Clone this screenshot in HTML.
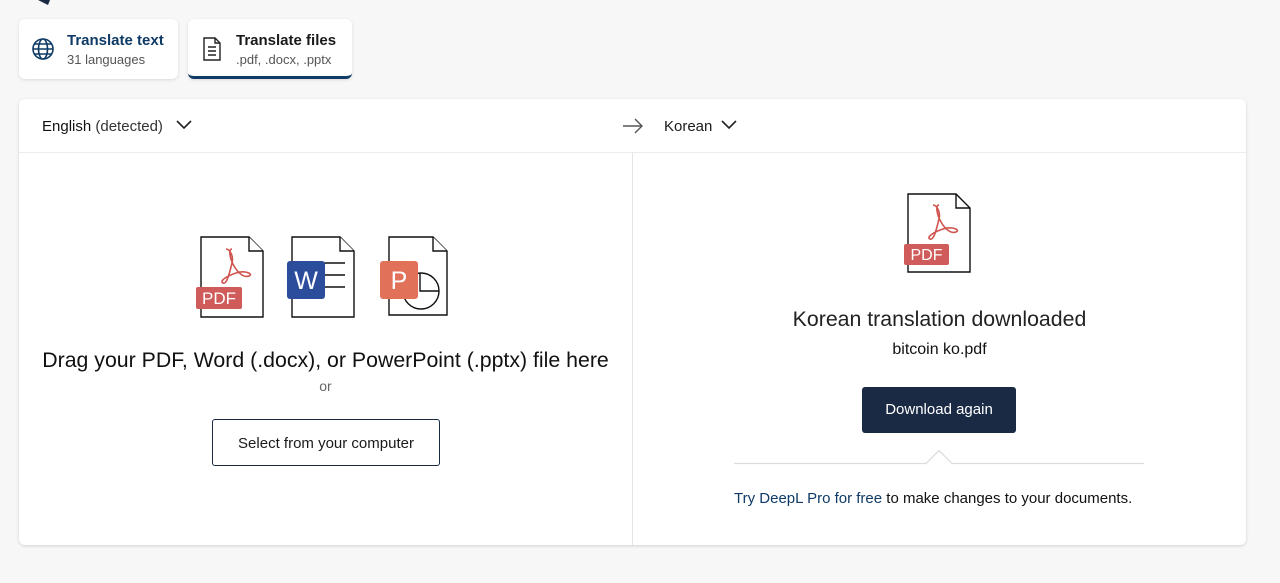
<!DOCTYPE html>
<html><head><meta charset="utf-8"><style>
*{margin:0;padding:0;box-sizing:border-box}
body{width:1280px;height:583px;background:#f7f7f8;font-family:"Liberation Sans",sans-serif;position:relative;overflow:hidden;color:#1a1a1a}
.tab{position:absolute;top:19px;height:60px;background:#fff;border-radius:6px;box-shadow:0 1px 3px rgba(0,0,0,.12)}
.t1{font-size:15px;font-weight:bold;position:absolute;top:13px}
.t2{font-size:13px;color:#555;position:absolute;top:33px}
.card{position:absolute;left:19px;top:99px;width:1227px;height:446px;background:#fff;border-radius:6px;box-shadow:0 1px 3px rgba(0,0,0,.15)}
.abs{position:absolute}
</style></head><body>
<svg class="abs" style="left:38px;top:0" width="14" height="6"><path d="M0 0 L10 5 L12 0Z" fill="#1a2a44"/></svg>
<div class="tab" style="left:19px;width:159px">
<svg class="abs" style="left:12px;top:18px" width="24" height="24" viewBox="0 0 24 24" fill="none" stroke="#0f3b66" stroke-width="1.6"><circle cx="12" cy="12" r="10"/><ellipse cx="12" cy="12" rx="4.5" ry="10"/><path d="M2 12h20M3.5 7h17M3.5 17h17"/></svg>
<div class="t1" style="left:48px;color:#0f3b66">Translate text</div><div class="t2" style="left:48px">31 languages</div></div>
<div class="tab" style="left:188px;width:164px;border-bottom:3px solid #0f3b66">
<svg class="abs" style="left:14px;top:18px" width="20" height="24" viewBox="0 0 20 24" fill="none" stroke="#222" stroke-width="1.4"><path d="M2 1h11l5 5v17H2z"/><path d="M13 1v5h5M6 10h8M6 14h8M6 18h8"/></svg>
<div class="t1" style="left:48px">Translate files</div><div class="t2" style="left:48px">.pdf, .docx, .pptx</div></div>

<div class="card">
<div class="abs" style="left:0;top:53px;width:1227px;border-top:1px solid #ececec"></div>
<div class="abs" style="left:613px;top:54px;height:392px;border-left:1px solid #e4e4e4"></div>
<div class="abs" style="left:23px;top:19px;font-size:15px"><span style="color:#111">English</span> <span style="color:#333">(detected)</span></div>
<svg class="abs" style="left:157px;top:21px" width="16" height="10"><path d="M1 1l7 7 7-7" fill="none" stroke="#222" stroke-width="1.6"/></svg>
<svg class="abs" style="left:603px;top:19px" width="22" height="16"><path d="M1 8h19M13 1l7 7-7 7" fill="none" stroke="#555" stroke-width="1.4"/></svg>
<div class="abs" style="left:645px;top:19px;font-size:15px">Korean</div>
<svg class="abs" style="left:702px;top:21px" width="16" height="10"><path d="M1 1l7 7 7-7" fill="none" stroke="#222" stroke-width="1.6"/></svg>

<svg class="abs" style="left:175px;top:136px" width="260" height="85" viewBox="0 0 260 85">
<g fill="#fff" stroke="#111" stroke-width="1.4">
<path d="M7 2h48l14 14v66H7z"/><path d="M55 2v14h14"/>
<path d="M98 2h48l14 14v66H98z"/><path d="M146 2v14h14"/>
<path d="M195 2h44l14 14v64H195z"/><path d="M239 2v14h14"/>
</g>
<path d="M38 14c-4 0-2 10 2 17s10 12 15 10-4-6-13-3-17 8-13 10 7-12 9-20-3-14-6-14" fill="none" stroke="#d0554f" stroke-width="1.6"/>
<rect x="2" y="52" width="46" height="22" rx="2" fill="#cf5c5a"/><text x="25" y="69" font-size="17" fill="#fff" text-anchor="middle" font-family="Liberation Sans">PDF</text>
<path d="M128 28h23M128 40h23M128 52h23" stroke="#111" stroke-width="1.4"/>
<rect x="93" y="26" width="38" height="38" rx="3" fill="#2b4d9b"/><text x="112" y="54" font-size="25" fill="#fff" text-anchor="middle" font-family="Liberation Sans">W</text>
<circle cx="227" cy="56" r="18" fill="none" stroke="#111" stroke-width="1.4"/>
<path d="M226 38v18h19" fill="none" stroke="#111" stroke-width="1.4"/>
<rect x="186" y="26" width="38" height="38" rx="3" fill="#e2715a"/><text x="205" y="54" font-size="25" fill="#fff" text-anchor="middle" font-family="Liberation Sans">P</text>
</svg>
<div class="abs" style="left:0;width:613px;top:249px;text-align:center;font-size:21.3px;color:#111">Drag your PDF, Word (.docx), or PowerPoint (.pptx) file here</div>
<div class="abs" style="left:0;width:613px;top:279px;text-align:center;font-size:14px;color:#666">or</div>
<div class="abs" style="left:193px;top:320px;width:228px;height:47px;border:1px solid #1a2a44;border-radius:3px;text-align:center;line-height:47px;font-size:15px">Select from your computer</div>

<svg class="abs" style="left:881px;top:93px" width="75" height="84" viewBox="0 0 75 84">
<path d="M8 2h48l14 14v64H8z" fill="#fff" stroke="#111" stroke-width="1.4"/><path d="M56 2v14h14" fill="none" stroke="#111" stroke-width="1.4"/>
<path d="M39 13c-4 0-2 10 2 17s10 12 15 10-4-6-13-3-17 8-13 10 7-12 9-20-3-14-6-14" fill="none" stroke="#d0554f" stroke-width="1.6"/>
<rect x="4" y="52" width="45" height="21" rx="2" fill="#cf5c5a"/><text x="26.5" y="68" font-size="16" fill="#fff" text-anchor="middle" font-family="Liberation Sans">PDF</text>
</svg>
<div class="abs" style="left:614px;width:613px;top:208px;text-align:center;font-size:21.3px;color:#222">Korean translation downloaded</div>
<div class="abs" style="left:614px;width:613px;top:242px;text-align:center;font-size:16px;color:#111">bitcoin ko.pdf</div>
<div class="abs" style="left:843px;top:288px;width:154px;height:46px;background:#1a2a44;border-radius:3px;color:#fff;text-align:center;line-height:46px;font-size:15px">Download again</div>
<svg class="abs" style="left:714px;top:350px" width="412" height="16"><path d="M1 14.5H193L206 1.5L219 14.5H411" fill="none" stroke="#ddd" stroke-width="1.3"/></svg>
<div class="abs" style="left:715px;top:391px;font-size:15px;color:#111"><span style="color:#0f3b66">Try DeepL Pro for free</span> to make changes to your documents.</div>
</div>
</body></html>
